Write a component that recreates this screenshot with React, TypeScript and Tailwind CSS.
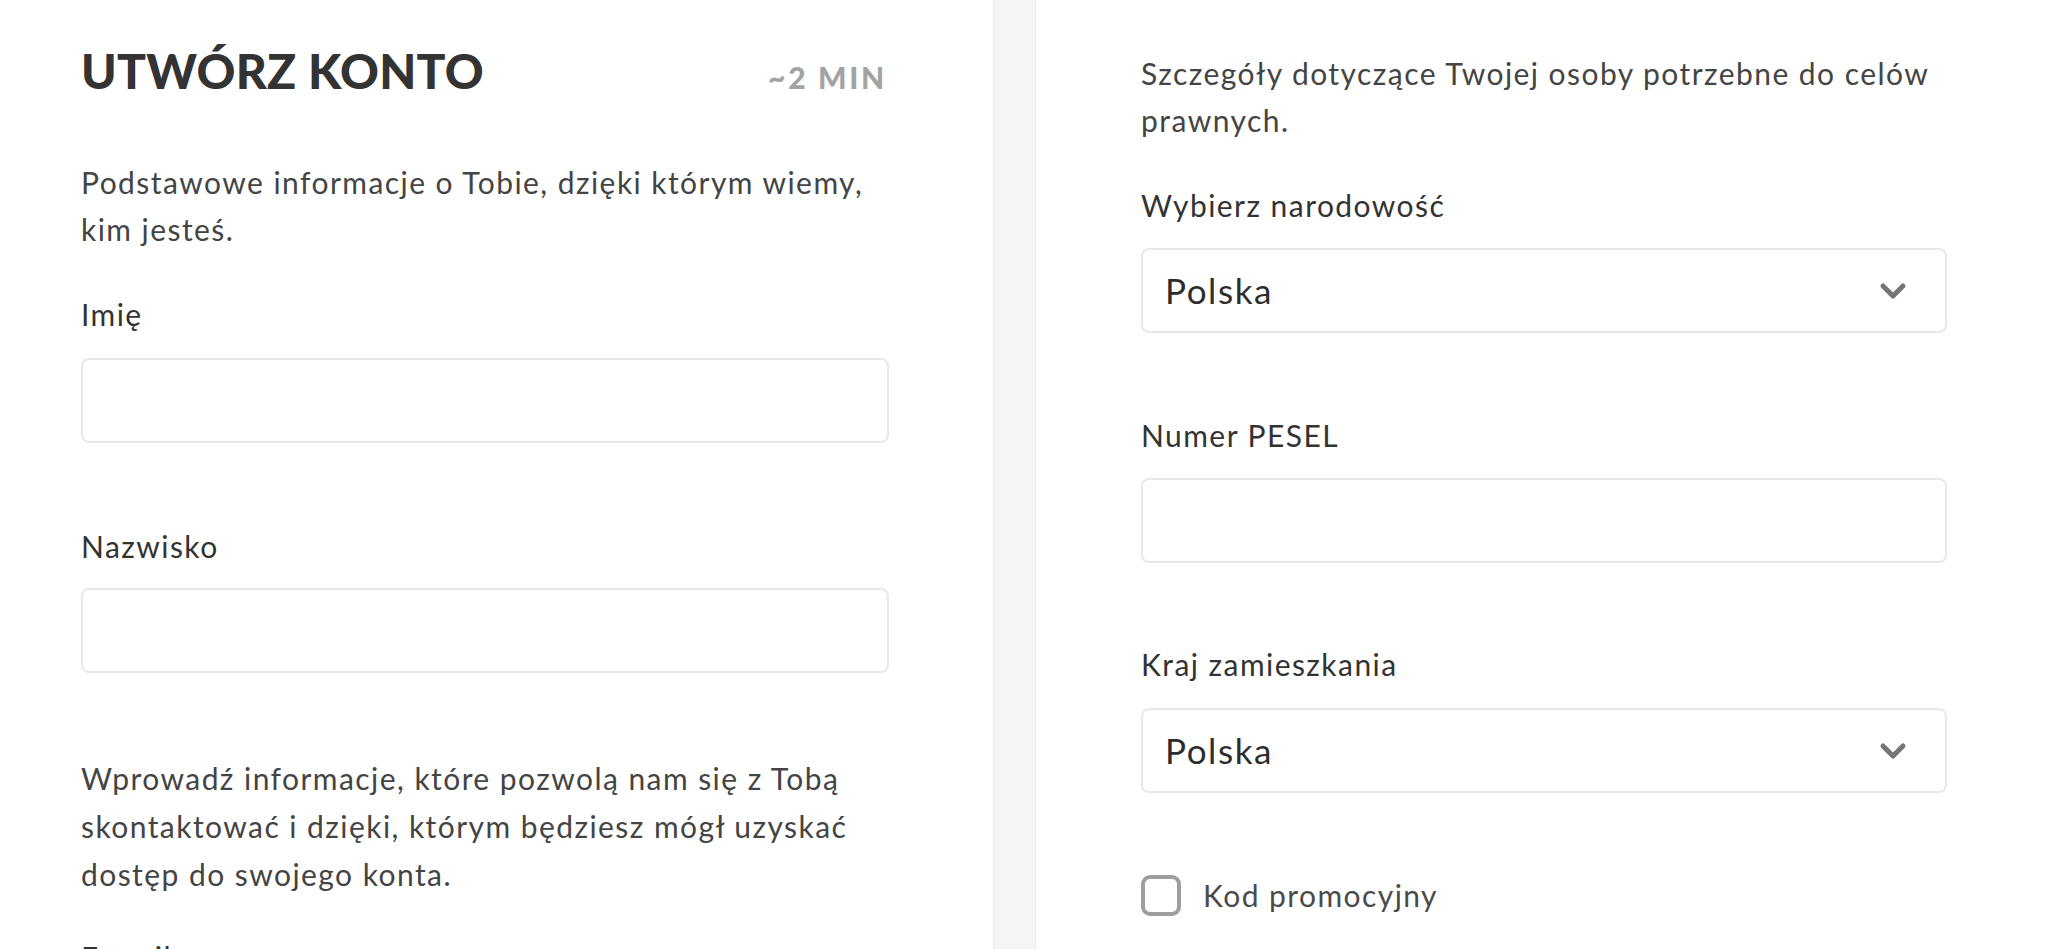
import React from 'react';

const font = { fontFamily: 'Lato, "Noto Sans", sans-serif' };

function Label({ children, className = '' }: { children: React.ReactNode; className?: string }) {
  return <p className={`text-[30px] leading-[47px] tracking-[0.048em] text-[#333333] ${className}`}>{children}</p>;
}

function TextInput({ className = '' }: { className?: string }) {
  return <div className={`h-[85px] w-full rounded-[8px] border-2 border-[#e8e8e8] bg-white ${className}`} />;
}

function SelectBox({ value, className = '' }: { value: string; className?: string }) {
  return (
    <div
      className={`flex h-[85px] w-full items-center justify-between rounded-[8px] border-2 border-[#e8e8e8] bg-white pl-[22px] pr-[38px] ${className}`}
    >
      <span className="text-[35px] tracking-[0.045em] text-[#2d2d2d]">{value}</span>
      <svg width="28" height="18" viewBox="0 0 28 18" fill="none">
        <path d="M4 4l10 10L24 4" stroke="#757575" strokeWidth="5" strokeLinecap="round" strokeLinejoin="round" />
      </svg>
    </div>
  );
}

export default function App() {
  return (
    <div className="flex h-[949px] w-[2048px] overflow-hidden bg-white" style={font}>
      {/* Left: basic info */}
      <div className="w-[993px] shrink-0 pl-[81px] pr-[104px]">
        <div className="mt-[47px] flex h-[48px] items-baseline justify-between">
          <h1 className="text-[48px] font-black leading-[48px] tracking-[0.005em] text-[#333333]">UTWÓRZ KONTO</h1>
          <span className="mr-[2px] text-[30px] font-black tracking-[0.09em] text-[#a3a3a3]">~2 MIN</span>
        </div>
        <p className="mt-[64px] text-[30px] leading-[47px] tracking-[0.048em] text-[#444444]">
          Podstawowe informacje o Tobie, dzięki którym wiemy,
          <br />
          kim jesteś.
        </p>
        <Label className="mt-[38px]">Imię</Label>
        <TextInput className="mt-[20px]" />
        <Label className="mt-[80px]">Nazwisko</Label>
        <TextInput className="mt-[18px]" />
        <p className="mt-[81px] text-[30px] leading-[48px] tracking-[0.048em] text-[#444444]">
          Wprowadź informacje, które pozwolą nam się z Tobą
          <br />
          skontaktować i dzięki, którym będziesz mógł uzyskać
          <br />
          dostęp do swojego konta.
        </p>
        <Label className="mt-[36px]">E-mail</Label>
      </div>

      {/* Gutter */}
      <div className="w-[43px] shrink-0 border-x border-[#ebecee] bg-[#f4f5f7]" />

      {/* Right: legal details */}
      <div className="flex-1 pl-[105px] pr-[101px]">
        <p className="mt-[50px] text-[30px] leading-[47px] tracking-[0.048em] text-[#444444]">
          Szczegóły dotyczące Twojej osoby potrzebne do celów
          <br />
          prawnych.
        </p>
        <Label className="mt-[38px]">Wybierz narodowość</Label>
        <SelectBox value="Polska" className="mt-[19px]" />
        <Label className="mt-[79px]">Numer PESEL</Label>
        <TextInput className="mt-[19px]" />
        <Label className="mt-[78px]">Kraj zamieszkania</Label>
        <SelectBox value="Polska" className="mt-[20px]" />
        <label className="mt-[82px] flex items-center gap-[22px]">
          <span className="h-[41px] w-[40px] rounded-[9px] border-[4px] border-[#9e9e9e] bg-white" />
          <span className="text-[30px] leading-[41px] tracking-[0.048em] text-[#4a4a4a]">Kod promocyjny</span>
        </label>
      </div>
    </div>
  );
}
